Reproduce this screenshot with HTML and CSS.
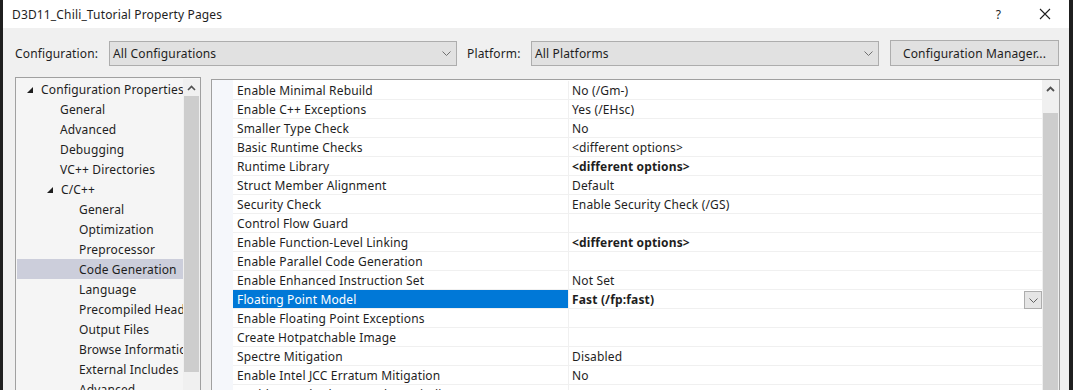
FILE: index.html
```html
<!DOCTYPE html>
<html lang="en">
<head>
  <meta charset="UTF-8" />
  <meta name="viewport" content="width=device-width, initial-scale=1.0"/>
  <title>D3D11_Chili_Tutorial Property Pages</title>
  <link rel="stylesheet" href="styles.css">
</head>
<body>
  <div class="window">
    <div class="titlebar">
      <span class="title">D3D11_Chili_Tutorial Property Pages</span>
      <span class="help">?</span>
      <span class="close">
        <svg width="12" height="12" viewBox="0 0 12 12"><path d="M1 1 L11 11 M11 1 L1 11" stroke="#1e1e1e" stroke-width="1.1" fill="none"/></svg>
      </span>
    </div>

    <div class="toolbar">
      <label class="lbl lbl-config">Configuration:</label>
      <div class="combo">
        <span>All Configurations</span>
        <svg class="chev" width="9" height="5" viewBox="0 0 9 5"><path d="M0.5 0.5 L4.5 4.5 L8.5 0.5" stroke="#707070" fill="none"/></svg>
      </div>
      <label class="lbl lbl-platform">Platform:</label>
      <div class="combo">
        <span>All Platforms</span>
        <svg class="chev" width="9" height="5" viewBox="0 0 9 5"><path d="M0.5 0.5 L4.5 4.5 L8.5 0.5" stroke="#707070" fill="none"/></svg>
      </div>
      <button class="btn">Configuration Manager...</button>
    </div>

    <div class="main">
      <!-- category tree -->
      <div class="tree">
        <ul class="tree-list">
          <li class="lvl0"><svg class="tri" width="6" height="6" viewBox="0 0 6 6"><polygon points="6,0 6,6 0,6" fill="#1e1e1e"/></svg>Configuration Properties</li>
          <li class="lvl1">General</li>
          <li class="lvl1">Advanced</li>
          <li class="lvl1">Debugging</li>
          <li class="lvl1">VC++ Directories</li>
          <li class="lvl1 open"><svg class="tri" width="6" height="6" viewBox="0 0 6 6"><polygon points="6,0 6,6 0,6" fill="#1e1e1e"/></svg>C/C++</li>
          <li class="lvl2">General</li>
          <li class="lvl2">Optimization</li>
          <li class="lvl2">Preprocessor</li>
          <li class="lvl2 selected">Code Generation</li>
          <li class="lvl2">Language</li>
          <li class="lvl2">Precompiled Headers</li>
          <li class="lvl2">Output Files</li>
          <li class="lvl2">Browse Information</li>
          <li class="lvl2">External Includes</li>
          <li class="lvl2">Advanced</li>
        </ul>
        <div class="vscroll tree-scroll">
          <div class="arrow">
            <svg width="9" height="6" viewBox="0 0 9 6"><path d="M1 5 L4.5 1.5 L8 5" stroke="#505050" stroke-width="1.6" fill="none"/></svg>
          </div>
          <div class="thumb"></div>
        </div>
      </div>

      <!-- property grid -->
      <div class="props">
        <div class="gutter"></div>
        <div class="grid" id="grid"></div>
        <div class="vscroll props-scroll">
          <div class="arrow">
            <svg width="9" height="6" viewBox="0 0 9 6"><path d="M1 5 L4.5 1.5 L8 5" stroke="#505050" stroke-width="1.8" fill="none"/></svg>
          </div>
          <div class="track"></div>
          <div class="thumb"></div>
        </div>
      </div>
    </div>
  </div>

  <script>
    const rows = [
      ["Enable Minimal Rebuild", "No (/Gm-)"],
      ["Enable C++ Exceptions", "Yes (/EHsc)"],
      ["Smaller Type Check", "No"],
      ["Basic Runtime Checks", "<different options>"],
      ["Runtime Library", "<different options>", "bold"],
      ["Struct Member Alignment", "Default"],
      ["Security Check", "Enable Security Check (/GS)"],
      ["Control Flow Guard", ""],
      ["Enable Function-Level Linking", "<different options>", "bold"],
      ["Enable Parallel Code Generation", ""],
      ["Enable Enhanced Instruction Set", "Not Set"],
      ["Floating Point Model", "Fast (/fp:fast)", "bold", true],
      ["Enable Floating Point Exceptions", ""],
      ["Create Hotpatchable Image", ""],
      ["Spectre Mitigation", "Disabled"],
      ["Enable Intel JCC Erratum Mitigation", "No"],
      ["Enable Standard C++ Stack Unwinding", ""]
    ];

    const grid = document.getElementById("grid");
    rows.forEach(([name, value, weight, selected]) => {
      const row = document.createElement("div");
      row.className = "row" + (selected ? " selected" : "");

      const n = document.createElement("div");
      n.className = "name";
      n.textContent = name;

      const v = document.createElement("div");
      v.className = "value" + (weight ? " bold" : "");
      v.textContent = value;

      if (selected) {
        const dd = document.createElement("span");
        dd.className = "dd";
        dd.innerHTML = '<svg width="9" height="5" viewBox="0 0 9 5"><path d="M0.5 0.5 L4.5 4.5 L8.5 0.5" stroke="#606060" fill="none"/></svg>';
        v.appendChild(dd);
      }

      row.appendChild(n);
      row.appendChild(v);
      grid.appendChild(row);
    });
  </script>
</body>
</html>
```

FILE: styles.css
```css
* {
  box-sizing: border-box;
}

body {
  margin: 0;
  background: #1f1f1f;
  font-family: "Noto Sans", "Open Sans", sans-serif;
  font-size: 12px;
  letter-spacing: 0.15px;
  color: #1e1e1e;
}

.window {
  margin: 0 4px 0 3px;
  height: 390px;
  background: #f0f0f0;
  overflow: hidden;
}

.titlebar {
  height: 28px;
  background: #fff;
  display: flex;
  align-items: center;
  padding-left: 9px;
}

.title {
  flex: 1;
  font-size: 12px;
}

.help {
  width: 47px;
  text-align: center;
  font-size: 12px;
}

.close {
  width: 46px;
  height: 28px;
  display: flex;
  align-items: center;
  justify-content: center;
  margin-right: 1px;
}

.toolbar {
  display: flex;
  align-items: center;
  padding: 12px 0 0 12px;
  height: 38px;
}

.lbl {
  display: block;
}

.lbl-config {
  width: 94px;
}

.lbl-platform {
  width: 64px;
  margin-left: 10px;
}

.combo {
  width: 348px;
  height: 25px;
  border: 1px solid #adadad;
  background: #e1e1e1;
  display: flex;
  align-items: center;
  justify-content: space-between;
  padding: 0 0 0 3px;
}

.combo .chev {
  margin-right: 5px;
}

.btn {
  margin-left: 11px;
  width: 169px;
  height: 26px;
  border: 1px solid #adadad;
  background: #e1e1e1;
  font-family: inherit;
  font-size: 12px;
  letter-spacing: inherit;
  color: #1e1e1e;
  padding: 0;
}

.main {
  display: flex;
  align-items: flex-start;
  margin-top: 11px;
  padding-left: 12px;
}

/* tree */

.tree {
  width: 186px;
  height: 330px;
  border: 1px solid #a0a0a0;
  background: #f5f5f5;
  display: flex;
  padding: 1px 0 0 1px;
}

.tree-list {
  list-style: none;
  margin: 0;
  padding: 0;
  width: 166px;
  overflow: hidden;
}

.tree-list li {
  height: 20px;
  padding-top: 2px;
  line-height: 18px;
  white-space: nowrap;
  overflow: hidden;
  display: flex;
  align-items: center;
}

.tree-list .tri {
  margin-right: 8px;
  flex-shrink: 0;
}

.lvl0 {
  padding-left: 10px;
}

.lvl1 {
  padding-left: 43px;
}

.lvl1.open {
  padding-left: 30px;
}

.lvl2 {
  padding-left: 62px;
}

.tree-list .selected {
  background: #cccedb;
}

.vscroll {
  width: 17px;
  background: #f0f0f0;
  display: flex;
  flex-direction: column;
}

.vscroll .arrow {
  height: 17px;
  display: flex;
  align-items: center;
  justify-content: center;
}

.tree-scroll .thumb {
  margin: 0 1px;
  height: 276px;
  background: #cdcdcd;
}

/* property grid */

.props {
  margin-left: 10px;
  margin-top: 2px;
  width: 849px;
  height: 330px;
  border: 1px solid #a0a0a0;
  background: #fff;
  display: flex;
}

.gutter {
  width: 21px;
  background: #f5f7fb;
}

.grid {
  width: 809px;
  padding-top: 1px;
}

.row {
  display: flex;
  height: 19px;
  border-bottom: 1px solid #f0f0f0;
}

.row .name {
  width: 336px;
  padding: 1px 0 0 4px;
  line-height: 18px;
  border-right: 1px solid #f0f0f0;
  white-space: nowrap;
  overflow: hidden;
}

.row .value {
  flex: 1;
  padding: 1px 0 0 3px;
  line-height: 18px;
  white-space: nowrap;
  display: flex;
  justify-content: space-between;
  align-items: flex-start;
}

.row .value.bold {
  font-weight: bold;
}

.row.selected .name {
  background: #0078d7;
  color: #fff;
}

.dd {
  width: 18px;
  height: 18px;
  border: 1px solid #adadad;
  background: #e5e5e5;
  display: flex;
  align-items: center;
  justify-content: center;
}

.props-scroll .track {
  height: 16px;
}

.props-scroll .thumb {
  flex: 1;
  margin: 0 1px;
  background: #cdcdcd;
}
```
